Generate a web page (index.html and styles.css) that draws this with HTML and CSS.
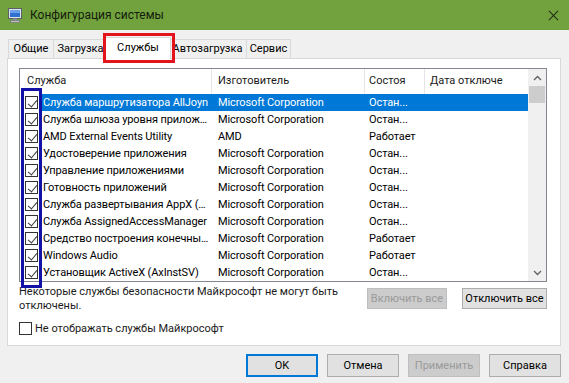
FILE: index.html
```html
<!DOCTYPE html>
<html lang="ru">
<head>
<meta charset="utf-8">
<title>Конфигурация системы</title>
<link rel="stylesheet" href="styles.css">
</head>
<body>
<div class="titlebar">
  <svg class="app-icon" viewBox="0 0 16 16" width="16" height="16">
    <rect x="1.5" y="1.5" width="13" height="10" fill="#dfe3e8" stroke="#5a6068"/>
    <rect x="3" y="3" width="10" height="7" fill="#2f6fd0"/>
    <rect x="3" y="3" width="10" height="3" fill="#6aa0ea"/>
    <rect x="6" y="11.5" width="4" height="2" fill="#8a9098"/>
    <rect x="3.5" y="13.5" width="9" height="2" fill="#b9bec4" stroke="#6b7078" stroke-width="0.6"/>
  </svg>
  <span class="title">Конфигурация системы</span>
  <svg class="close" viewBox="0 0 12 12" width="12" height="12">
    <path d="M1 1 L11 11 M11 1 L1 11" stroke="#1e2a14" stroke-width="1.1" fill="none"/>
  </svg>
</div>

<div class="tabs">
  <div class="tab t1">Общие</div>
  <div class="tab t2">Загрузка</div>
  <div class="tab t3 active">Службы<span class="mark-red"></span></div>
  <div class="tab t4">Автозагрузка</div>
  <div class="tab t5">Сервис</div>
</div>

<div class="panel">
  <div class="listview">
    <div class="lv-main">
      <div class="lv-header">
        <div class="hc h1">Служба</div>
        <div class="hc h2">Изготовитель</div>
        <div class="hc h3">Состоя</div>
        <div class="hc h4">Дата отключе</div>
      </div>
      <div class="lv-row selected">
        <span class="cb checked"></span>
        <div class="cells"><span class="c1">Служба маршрутизатора AllJoyn</span><span class="c2">Microsoft Corporation</span><span class="c3">Остан...</span><span class="c4"></span></div>
      </div>
      <div class="lv-row">
        <span class="cb checked"></span>
        <div class="cells"><span class="c1">Служба шлюза уровня приложения</span><span class="c2">Microsoft Corporation</span><span class="c3">Остан...</span><span class="c4"></span></div>
      </div>
      <div class="lv-row">
        <span class="cb checked"></span>
        <div class="cells"><span class="c1">AMD External Events Utility</span><span class="c2">AMD</span><span class="c3">Работает</span><span class="c4"></span></div>
      </div>
      <div class="lv-row">
        <span class="cb checked"></span>
        <div class="cells"><span class="c1">Удостоверение приложения</span><span class="c2">Microsoft Corporation</span><span class="c3">Остан...</span><span class="c4"></span></div>
      </div>
      <div class="lv-row">
        <span class="cb checked"></span>
        <div class="cells"><span class="c1">Управление приложениями</span><span class="c2">Microsoft Corporation</span><span class="c3">Остан...</span><span class="c4"></span></div>
      </div>
      <div class="lv-row">
        <span class="cb checked"></span>
        <div class="cells"><span class="c1">Готовность приложений</span><span class="c2">Microsoft Corporation</span><span class="c3">Остан...</span><span class="c4"></span></div>
      </div>
      <div class="lv-row">
        <span class="cb checked"></span>
        <div class="cells"><span class="c1">Служба развертывания AppX (AppXSVC)</span><span class="c2">Microsoft Corporation</span><span class="c3">Остан...</span><span class="c4"></span></div>
      </div>
      <div class="lv-row">
        <span class="cb checked"></span>
        <div class="cells"><span class="c1">Служба AssignedAccessManager</span><span class="c2">Microsoft Corporation</span><span class="c3">Остан...</span><span class="c4"></span></div>
      </div>
      <div class="lv-row">
        <span class="cb checked"></span>
        <div class="cells"><span class="c1">Средство построения конечных точек Windows Audio</span><span class="c2">Microsoft Corporation</span><span class="c3">Работает</span><span class="c4"></span></div>
      </div>
      <div class="lv-row">
        <span class="cb checked"></span>
        <div class="cells"><span class="c1">Windows Audio</span><span class="c2">Microsoft Corporation</span><span class="c3">Работает</span><span class="c4"></span></div>
      </div>
      <div class="lv-row">
        <span class="cb checked"></span>
        <div class="cells"><span class="c1">Установщик ActiveX (AxInstSV)</span><span class="c2">Microsoft Corporation</span><span class="c3">Остан...</span><span class="c4"></span></div>
      </div>
    </div>
    <div class="scrollbar">
      <div class="sb-btn"><svg viewBox="0 0 9 6" width="9" height="6"><path d="M1 5 L4.5 1.5 L8 5" stroke="#606060" stroke-width="1.3" fill="none"/></svg></div>
      <div class="sb-track"><div class="sb-thumb"></div></div>
      <div class="sb-btn"><svg viewBox="0 0 9 6" width="9" height="6"><path d="M1 1 L4.5 4.5 L8 1" stroke="#606060" stroke-width="1.3" fill="none"/></svg></div>
    </div>
    <span class="mark-blue"></span>
  </div>

  <div class="lower">
    <div class="note">Некоторые службы безопасности Майкрософт не могут быть<br>отключены.</div>
    <div class="lower-btns">
      <button class="btn disabled w-enable">Включить все</button>
      <button class="btn w-disable">Отключить все</button>
    </div>
  </div>

  <label class="hide-ms">
    <span class="cb"></span>
    <span>Не отображать службы Майкрософт</span>
  </label>
</div>

<div class="dialog-btns">
  <button class="btn dbtn default">OK</button>
  <button class="btn dbtn">Отмена</button>
  <button class="btn dbtn disabled">Применить</button>
  <button class="btn dbtn">Справка</button>
</div>
</body>
</html>
```

FILE: styles.css
```css
* { box-sizing: border-box; }
html, body { margin: 0; padding: 0; }
body {
  width: 569px;
  height: 383px;
  overflow: hidden;
  background: #f0f0f0;
  font-family: Roboto, "Noto Sans", sans-serif;
  font-size: 11px;
  color: #000;
}

/* title bar */
.titlebar {
  height: 30px;
  background: #71a23e;
  display: flex;
  align-items: center;
  padding-left: 7px;
}
.app-icon { margin-right: 7px; flex: none; }
.title { flex: 1; font-size: 12px; color: #141c0c; }
.close { margin-right: 10px; width: 11px; height: 11px; }

/* tabs */
.tabs {
  display: flex;
  align-items: flex-end;
  height: 19px;
  margin-top: 9px;
  padding-left: 8px;
  position: relative;
  z-index: 2;
}
.tab {
  height: 19px;
  border: 1px solid #d9d9d9;
  border-bottom: none;
  margin-right: -1px;
  background: #f0f0f0;
  text-align: center;
  line-height: 18px;
  white-space: nowrap;
}
.t1 { width: 46px; }
.t2 { width: 55px; }
.t3 { width: 62px; }
.t4 { width: 79px; }
.t5 { width: 45px; }
.tab.active {
  height: 22px;
  width: 66px;
  margin: 0 -3px -1px -2px;
  background: #fff;
  position: relative;
  z-index: 3;
  line-height: 19px;
}
.mark-red {
  position: absolute;
  left: -3px;
  top: -5px;
  right: -5px;
  bottom: -4px;
  border: 3px solid #e3141c;
}

/* panel */
.panel {
  height: 288px;
  margin: 0 8px 0 7px;
  border: 1px solid #d9d9d9;
  background: #fff;
  padding: 9px 13px 0 11px;
  position: relative;
  z-index: 1;
}

.listview {
  height: 214px;
  border: 1px solid #828790;
  display: flex;
  position: relative;
}
.lv-main { flex: 1; min-width: 0; }
.lv-header {
  display: grid;
  grid-template-columns: 192px 153px 60px 1fr;
  height: 25px;
}
.hc {
  border-right: 1px solid #e5e5e5;
  line-height: 24px;
  white-space: nowrap;
  overflow: hidden;
  color: #1a1a1a;
}
.h1 { padding-left: 7px; }
.h2 { padding-left: 6px; }
.h3 { padding-left: 4px; }
.h4 { padding-left: 5px; border-right: none; }

.lv-row {
  height: 17px;
  display: flex;
  align-items: center;
}
.lv-row .cb { margin-left: 5px; margin-right: 3px; }
.cells {
  flex: 1;
  display: grid;
  grid-template-columns: 171px 153px 60px 1fr;
  height: 17px;
  line-height: 17px;
  white-space: nowrap;
  letter-spacing: -0.1px;
}
.cells span { overflow: hidden; }
.c1 { padding-left: 2px; text-overflow: ellipsis; padding-right: 1px; }
.c2 { padding-left: 6px; }
.c3 { padding-left: 4px; }
.lv-row.selected .cells { background: #0078d7; color: #fff; }

/* checkbox */
.cb {
  width: 13px;
  height: 13px;
  border: 1px solid #333;
  background: #fff;
  flex: none;
  position: relative;
  display: inline-block;
}
.cb.checked::after {
  content: "";
  position: absolute;
  left: 3.5px;
  top: 0.5px;
  width: 4px;
  height: 8px;
  border-right: 1.4px solid #3a3a3a;
  border-bottom: 1.4px solid #3a3a3a;
  transform: rotate(40deg);
}

/* scrollbar */
.scrollbar {
  width: 18px;
  background: #f0f0f0;
  display: flex;
  flex-direction: column;
}
.sb-btn {
  height: 17px;
  display: flex;
  align-items: center;
  justify-content: center;
}
.sb-track { flex: 1; padding: 0 1px; }
.sb-thumb { height: 17px; background: #cdcdcd; }

.mark-blue {
  position: absolute;
  left: 1px;
  top: 19px;
  width: 21px;
  height: 200px;
  border: 3px solid #1212a6;
}

/* lower section */
.lower {
  display: flex;
  margin-top: 3px;
}
.note {
  flex: 1;
  line-height: 14px;
  color: #1a1a1a;
}
.lower-btns {
  display: flex;
  gap: 15px;
  margin-top: 3px;
}
.btn {
  font-family: inherit;
  font-size: 11px;
  height: 21px;
  padding: 0;
  background: #e1e1e1;
  border: 1px solid #adadad;
  color: #000;
}
.btn.disabled {
  background: #cccccc;
  border-color: #bfbfbf;
  color: #9a9a9a;
}
.w-enable { width: 80px; }
.w-disable { width: 85px; }

.hide-ms {
  display: flex;
  align-items: center;
  gap: 3px;
  margin-top: 9px;
  margin-left: 0;
  color: #1a1a1a;
}

/* dialog buttons */
.dialog-btns {
  display: flex;
  justify-content: flex-end;
  gap: 9px;
  padding-right: 8px;
  margin-top: 8px;
}
.dbtn { width: 72px; height: 23px; }
.dbtn.default { border: 2px solid #0078d7; }
```
